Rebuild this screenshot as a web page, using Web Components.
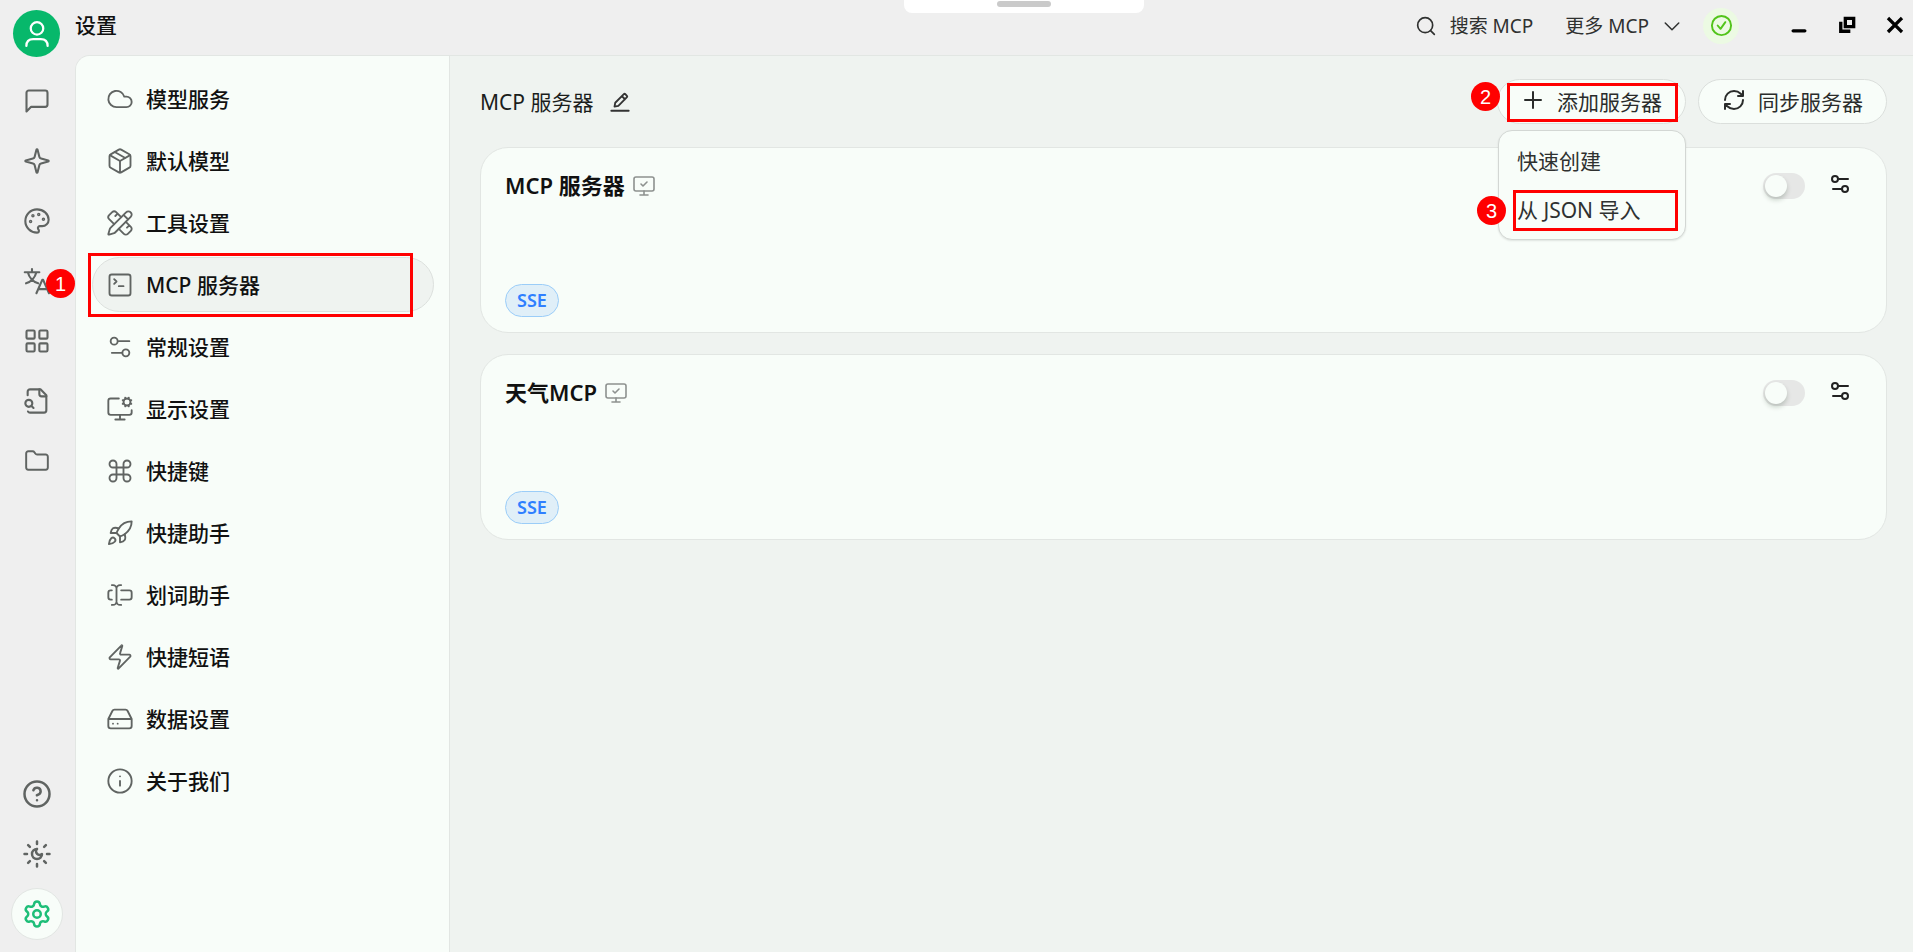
<!DOCTYPE html>
<html lang="zh-CN">
<head>
<meta charset="UTF-8">
<meta name="viewport" content="width=device-width, initial-scale=1.0">
<title>设置</title>
<style>
    :root {
        --bar: #efefef;
        --panel: #f8fdf9;
        --page: #eff3f0;
        --line: #e2e6e3;
        --icon: #606462;
        --green: #07b86b;
        --mark: #ff0000;
    }
    body {
        margin: 0;
        background: var(--bar);
        color: #1b1d1c;
        font-family: "Noto Sans", "Noto Sans CJK SC", sans-serif;
        font-size: 21px;
        line-height: 28px;
    }
</style>
</head>
<body>
<settings-app></settings-app>

<script>
const ICONS = {
    user: '<circle cx="12" cy="7.500" r="5"/><path d="M3.500 21.500c0-4 2.500-5.500 5.500-5.500h6c3 0 5.500 1.500 5.500 5.500"/>',
    message: '<path d="M21 15a2 2 0 0 1-2 2H7l-4 4V5a2 2 0 0 1 2-2h14a2 2 0 0 1 2 2z"/>',
    sparkle: '<path d="M9.937 15.5A2 2 0 0 0 8.5 14.063l-6.135-1.582a.5.5 0 0 1 0-.962L8.5 9.936A2 2 0 0 0 9.937 8.5l1.582-6.135a.5.5 0 0 1 .963 0L14.063 8.5A2 2 0 0 0 15.5 9.937l6.135 1.581a.5.5 0 0 1 0 .964L15.5 14.063a2 2 0 0 0-1.437 1.437l-1.582 6.135a.5.5 0 0 1-.963 0z"/>',
    palette: '<circle cx="13.5" cy="6.5" r=".6"/><circle cx="17.5" cy="10.5" r=".6"/><circle cx="8.5" cy="7.5" r=".6"/><circle cx="6.500" cy="12.5" r=".6"/><path d="M12 2C6.5 2 2 6.5 2 12s4.5 10 10 10c.926 0 1.648-.746 1.648-1.688 0-.437-.18-.835-.437-1.125-.29-.289-.438-.652-.438-1.125a1.64 1.64 0 0 1 1.668-1.668h1.996c3.051 0 5.555-2.503 5.555-5.554C21.965 6.012 17.461 2 12 2z"/>',
    translate: '<path d="M1.500 4.500h12.500M7.700 1.800v2.500M4.300 5c.8 3.500 4 7.500 8.700 9M11.300 5c-.8 3.500-4 7.500-8.700 9"/><path d="M11.500 22.500l5-11.500h.8l5 11.500M13.300 19h7.200"/>',
    grid: '<rect x="3" y="3" width="7" height="7" rx="1"/><rect x="14" y="3" width="7" height="7" rx="1"/><rect x="14" y="14" width="7" height="7" rx="1"/><rect x="3" y="14" width="7" height="7" rx="1"/>',
    fileSearch: '<path d="M14 2v4a2 2 0 0 0 2 2h4"/><path d="M4.268 21a2 2 0 0 0 1.727 1H18a2 2 0 0 0 2-2V7l-5-5H6a2 2 0 0 0-2 2v3"/><path d="m9 18-1.500-1.500"/><circle cx="5" cy="14" r="3"/>',
    folder: '<path d="M20 20a2 2 0 0 0 2-2V8a2 2 0 0 0-2-2h-7.900a2 2 0 0 1-1.690-.9L9.600 3.900A2 2 0 0 0 7.930 3H4a2 2 0 0 0-2 2v13a2 2 0 0 0 2 2Z"/>',
    help: '<circle cx="12" cy="12" r="10"/><path d="M9.090 9a3 3 0 0 1 5.830 1c0 2-3 3-3 3M12 17h.01"/>',
    sunMoon: '<path d="M12 8a2.830 2.830 0 0 0 4 4 4 4 0 1 1-4-4M12 2v2M12 20v2M4.900 4.900l1.400 1.400M17.700 17.700l1.400 1.400M2 12h2M20 12h2M6.300 17.700l-1.400 1.400M19.100 4.900l-1.400 1.400"/>',
    gear: '<path d="M9.671 4.136a2.34 2.34 0 0 1 4.659 0 2.34 2.34 0 0 0 3.319 1.915 2.34 2.34 0 0 1 2.33 4.033 2.34 2.34 0 0 0 0 3.831 2.34 2.34 0 0 1-2.33 4.033 2.34 2.34 0 0 0-3.319 1.915 2.34 2.34 0 0 1-4.659 0 2.34 2.34 0 0 0-3.32-1.915 2.34 2.34 0 0 1-2.33-4.033 2.34 2.34 0 0 0 0-3.831A2.34 2.34 0 0 1 6.35 6.051a2.34 2.34 0 0 0 3.319-1.915"/><circle cx="12" cy="12" r="3"/>',
    cloud: '<path d="M17.5 19H9a7 7 0 1 1 6.710-9h1.790a4.500 4.500 0 1 1 0 9Z"/>',
    box: '<path d="M11 21.730a2 2 0 0 0 2 0l7-4A2 2 0 0 0 21 16V8a2 2 0 0 0-1-1.730l-7-4a2 2 0 0 0-2 0l-7 4A2 2 0 0 0 3 8v8a2 2 0 0 0 1 1.730zM12 22V12"/><path d="M3.290 7 12 12l8.710-5M7.500 4.270l9 5.150"/>',
    tools: '<path d="M13 7 8.700 2.700a2.410 2.410 0 0 0-3.400 0L2.700 5.300a2.410 2.410 0 0 0 0 3.400L7 13M8 6l2-2M18 16l2-2M17 11l4.300 4.300c.94.94.94 2.460 0 3.400l-2.600 2.600c-.94.94-2.460.94-3.400 0L11 17"/><path d="M21.174 6.812a1 1 0 0 0-3.986-3.987L3.842 16.174a2 2 0 0 0-.5.83l-1.321 4.352a.5.5 0 0 0 .623.622l4.353-1.320a2 2 0 0 0 .83-.497zM15 5l4 4"/>',
    terminal: '<path d="m7 11 2-2-2-2M11 13h4"/><rect x="3" y="3" width="18" height="18" rx="2"/>',
    sliders: '<path d="M20 7h-9M14 17H5"/><circle cx="17" cy="17" r="3"/><circle cx="7" cy="7" r="3"/>',
    monitorCog: '<path d="M12 17v4M14.305 7.530l.923-.382M15.228 4.852l-.923-.383M16.852 3.228l-.383-.924M16.852 8.772l-.383.923M19.148 3.228l.383-.924M19.530 9.696l-.382-.924M20.772 4.852l.924-.383M20.772 7.148l.924.383M22 13v2a2 2 0 0 1-2 2H4a2 2 0 0 1-2-2V5a2 2 0 0 1 2-2h7M8 21h8"/><circle cx="18" cy="6" r="3"/>',
    command: '<path d="M15 6v12a3 3 0 1 0 3-3H6a3 3 0 1 0 3 3V6a3 3 0 1 0-3 3h12a3 3 0 1 0-3-3"/>',
    rocket: '<path d="M4.500 16.500c-1.500 1.260-2 5-2 5s3.740-.5 5-2c.71-.84.7-2.130-.09-2.910a2.180 2.180 0 0 0-2.910-.09zM12 15l-3-3a22 22 0 0 1 2-3.950A12.880 12.880 0 0 1 22 2c0 2.720-.78 7.500-6 11a22.350 22.350 0 0 1-4 2z"/><path d="M9 12H4s.55-3.030 2-4c1.620-1.080 5 0 5 0M12 15v5s3.030-.55 4-2c1.080-1.620 0-5 0-5"/>',
    cursor: '<path d="M5 3.500h1a3 3 0 0 1 3 3 3 3 0 0 1 3-3h1M13 20.500h-1a3 3 0 0 1-3-3 3 3 0 0 1-3 3H5M5 16H4a2 2 0 0 1-2-2v-4a2 2 0 0 1 2-2h1M13 8h7a2 2 0 0 1 2 2v4a2 2 0 0 1-2 2h-7M9 7v10"/>',
    zap: '<path d="M4 14a1 1 0 0 1-.78-1.630l9.900-10.200a.5.5 0 0 1 .86.46l-1.920 6.020A1 1 0 0 0 13 10h7a1 1 0 0 1 .78 1.630l-9.900 10.200a.5.5 0 0 1-.86-.46l1.920-6.020A1 1 0 0 0 11 14z"/>',
    drive: '<path d="M22 12H2M5.450 5.110 2 12v6a2 2 0 0 0 2 2h16a2 2 0 0 0 2-2v-6l-3.450-6.890A2 2 0 0 0 16.760 4H7.240a2 2 0 0 0-1.790 1.110zM6 16h.01M10 16h.01"/>',
    info: '<circle cx="12" cy="12" r="10"/><path d="M12 16v-4M12 8h.01"/>',
    monitorCheck: '<path d="m9 10 2 2 4-4M12 17v4M8 21h8"/><rect x="2" y="3" width="20" height="14" rx="2"/>',
    search: '<circle cx="11" cy="11" r="9"/><path d="m22 22-4.500-4.500"/>',
    chevron: '<path d="m3 8 9 9 9-9"/>',
    check: '<circle cx="12" cy="12" r="10"/><path d="m8 12 3 3.500 5-7"/>',
    minimize: '<path d="M5 19h14"/>',
    restore: '<path d="M10 4h10v10H10z" stroke-linejoin="miter"/><path d="M4.500 8v11.500H16" stroke-linecap="butt" stroke-linejoin="miter"/>',
    close: '<path d="m5 5 14 14M19 5 5 19" stroke-linecap="square"/>',
    plus: '<path d="M12 4v16M4 12h16"/>',
    refresh: '<path d="M3 12a9 9 0 0 1 9-9 9.750 9.750 0 0 1 6.740 2.740L21 8M21 3v5h-5M21 12a9 9 0 0 1-9 9 9.750 9.750 0 0 1-6.740-2.740L3 16M8 16H3v5"/>',
    edit: '<path d="M6 17l.8-4.200L16.200 3.300a1 1 0 0 1 1.400 0l2 2a1 1 0 0 1 0 1.400L10.200 16.200zM14 5.500l3.500 3.500M2.500 21.500h19"/>'
};

// <ui-icon name="" size="" stroke="">
class UiIcon extends HTMLElement {
    constructor() {
        super();
        this.attachShadow({ mode: 'open' });
    }

    connectedCallback() {
        const size = this.getAttribute('size') || 28;
        const stroke = this.getAttribute('stroke') || 1.6;
        this.shadowRoot.innerHTML = `
            <style>
                :host { display: block; flex: none; }
                svg { display: block; }
            </style>
            <svg width="${size}" height="${size}" viewBox="0 0 24 24" fill="none" stroke="currentColor"
                stroke-width="${stroke}" stroke-linecap="round" stroke-linejoin="round" aria-hidden="true">
                ${ICONS[this.getAttribute('name')] || ''}
            </svg>
        `;
    }
}

// Numbered red dot of the walkthrough
class StepDot extends HTMLElement {
    constructor() {
        super();
        this.attachShadow({ mode: 'open' });
        this.shadowRoot.innerHTML = `
            <style>
                :host {
                    display: flex;
                    align-items: center;
                    justify-content: center;
                    width: 29px;
                    height: 29px;
                    border-radius: 50%;
                    background: var(--mark);
                    color: #fff;
                    font: 20px/28px "Liberation Sans", sans-serif;
                }
            </style>
            <slot></slot>
        `;
    }
}

class NavRail extends HTMLElement {
    constructor() {
        super();
        this.attachShadow({ mode: 'open' });
    }

    connectedCallback() {
        const top = [
            ['message', '对话'], ['sparkle', '助手'], ['palette', '绘画'], ['translate', '翻译'],
            ['grid', '小程序'], ['fileSearch', '知识库'], ['folder', '文件']
        ];
        const bottom = [['help', '帮助'], ['sunMoon', '主题'], ['gear', '设置']];
        const button = ([icon, label], size, stroke) => `
            <button class="${icon}" aria-label="${label}">
                <ui-icon name="${icon}" size="${size}" stroke="${stroke}"></ui-icon>
            </button>`;

        this.shadowRoot.innerHTML = `
            <style>
                :host {
                    display: flex;
                    flex-direction: column;
                    align-items: center;
                    box-sizing: border-box;
                    padding: 10px 2px 12px 0;
                }
                nav {
                    display: flex;
                    flex-direction: column;
                    gap: 8px;
                }
                .bottom { margin-top: auto; }
                button {
                    display: flex;
                    align-items: center;
                    justify-content: center;
                    box-sizing: border-box;
                    width: 52px;
                    height: 52px;
                    padding: 0;
                    border: 1px solid transparent;
                    border-radius: 50%;
                    background: none;
                    color: var(--icon);
                }
                .avatar {
                    width: 47px;
                    height: 47px;
                    margin-bottom: 18px;
                    border: 0;
                    background: var(--green);
                    color: #fff;
                }
                .gear {
                    background: var(--panel);
                    border-color: var(--line);
                    color: #1ebe78;
                }
            </style>
            <button class="avatar" aria-label="用户"><ui-icon name="user" size="30" stroke="1.8"></ui-icon></button>
            <nav>${top.map(item => button(item, item[0] === 'folder' ? 26 : 28, 1.8)).join('')}</nav>
            <nav class="bottom">${bottom.map(item => button(item, 30, 2)).join('')}</nav>
        `;
    }
}

class TopBar extends HTMLElement {
    constructor() {
        super();
        this.attachShadow({ mode: 'open' });
        this.shadowRoot.innerHTML = `
            <style>
                :host {
                    display: flex;
                    align-items: center;
                    height: 51px;
                    padding-bottom: 4px;
                }
                h1 {
                    margin: 0;
                    padding-bottom: 2px;
                    font-size: 21px;
                    font-weight: 500;
                    color: #111;
                }
                .tools, .windows {
                    display: flex;
                    align-items: center;
                }
                .tools { margin-left: auto; }
                .windows {
                    gap: 12px;
                    padding-bottom: 2px;
                }
                button {
                    display: flex;
                    align-items: center;
                    gap: 14px;
                    padding: 0;
                    border: 0;
                    background: none;
                    color: #2f3130;
                    font: inherit;
                    font-size: 19px;
                }
                .more { margin-left: 32px; }
                .status {
                    justify-content: center;
                    width: 36px;
                    height: 36px;
                    margin: 0 42px 0 22px;
                    border-radius: 50%;
                    background: #ecfae3;
                    color: #52c41a;
                }
                .windows button {
                    justify-content: center;
                    width: 36px;
                    height: 36px;
                    color: #000;
                }
            </style>
            <h1><slot></slot></h1>
            <div class="tools">
                <button><ui-icon name="search" size="20" stroke="2"></ui-icon>搜索 MCP</button>
                <button class="more">更多 MCP<ui-icon name="chevron" size="18" stroke="2"></ui-icon></button>
                <button class="status" aria-label="状态"><ui-icon name="check" size="23" stroke="2"></ui-icon></button>
            </div>
            <div class="windows">
                <button aria-label="最小化"><ui-icon name="minimize" size="20" stroke="4"></ui-icon></button>
                <button aria-label="还原"><ui-icon name="restore" size="20" stroke="4"></ui-icon></button>
                <button aria-label="关闭"><ui-icon name="close" size="20" stroke="4"></ui-icon></button>
            </div>
        `;
    }
}

class SettingsMenu extends HTMLElement {
    constructor() {
        super();
        this.attachShadow({ mode: 'open' });
        this.shadowRoot.innerHTML = `
            <style>
                :host {
                    display: block;
                    padding: 15px 15px 15px 16px;
                    background: var(--panel);
                    border-right: 1px solid var(--line);
                    border-top-left-radius: 14px;
                }
                nav {
                    display: flex;
                    flex-direction: column;
                    gap: 7px;
                }
            </style>
            <nav><slot></slot></nav>
        `;
    }
}

class MenuItem extends HTMLElement {
    constructor() {
        super();
        this.attachShadow({ mode: 'open' });
    }

    connectedCallback() {
        const step = this.getAttribute('step');
        this.shadowRoot.innerHTML = `
            <style>
                :host {
                    display: block;
                    position: relative;
                }
                a {
                    display: flex;
                    align-items: center;
                    gap: 12px;
                    box-sizing: border-box;
                    height: 55px;
                    padding: 0 13px;
                    border: 1px solid transparent;
                    border-radius: 28px;
                    color: #111;
                    font-weight: 500;
                    text-decoration: none;
                }
                ui-icon { color: var(--icon); }
                :host([active]) a {
                    background: var(--page);
                    border-color: #dde1de;
                }
                .frame {
                    position: absolute;
                    inset: -4px 21px -5px -4px;
                    border: 3px solid var(--mark);
                }
                step-dot {
                    position: absolute;
                    left: -46px;
                    top: 12px;
                    z-index: 2;
                }
            </style>
            <a href="#${this.getAttribute('icon')}">
                <ui-icon name="${this.getAttribute('icon')}"></ui-icon>
                <span><slot></slot></span>
            </a>
            ${step ? `<div class="frame"></div><step-dot>${step}</step-dot>` : ''}
        `;
    }
}

class PillButton extends HTMLElement {
    constructor() {
        super();
        this.attachShadow({ mode: 'open' });
    }

    connectedCallback() {
        this.shadowRoot.innerHTML = `
            <style>
                :host { display: block; }
                button {
                    display: flex;
                    align-items: center;
                    gap: 12px;
                    box-sizing: border-box;
                    height: 45px;
                    padding: 0 23px;
                    border: 1px solid #dbdfdc;
                    border-radius: 23px;
                    background: var(--panel);
                    color: #2a2c2b;
                    font: inherit;
                }
                ui-icon { padding-bottom: 3px; }
            </style>
            <button>
                <ui-icon name="${this.getAttribute('icon')}" size="24" stroke="2"></ui-icon>
                <slot></slot>
            </button>
        `;
    }
}

class AddServer extends HTMLElement {
    constructor() {
        super();
        this.attachShadow({ mode: 'open' });
        this.shadowRoot.innerHTML = `
            <style>
                :host {
                    display: block;
                    position: relative;
                }
                .menu {
                    position: absolute;
                    top: 51px;
                    left: 1px;
                    right: 0;
                    z-index: 1;
                    display: flex;
                    flex-direction: column;
                    padding: 5px;
                    border: 1px solid #d3d7d4;
                    border-radius: 14px;
                    background: var(--panel);
                    box-shadow: 0 1px 2px rgba(0, 0, 0, 0.1);
                }
                .menu button {
                    height: 49px;
                    padding: 0 13px;
                    border: 0;
                    background: none;
                    color: #2f3130;
                    font: inherit;
                    text-align: left;
                }
                .frame, step-dot {
                    position: absolute;
                    z-index: 2;
                }
                .frame {
                    box-sizing: border-box;
                    right: 8px;
                    border: 3px solid var(--mark);
                }
                .add { left: 10px; top: 4px; height: 39px; }
                .json { left: 16px; top: 111px; height: 41px; }
                .two { left: -26px; top: 3px; }
                .three { left: -20px; top: 117px; }
            </style>
            <pill-button icon="plus">添加服务器</pill-button>
            <div class="menu" role="menu">
                <button role="menuitem">快速创建</button>
                <button role="menuitem">从 JSON 导入</button>
            </div>
            <div class="frame add"></div>
            <div class="frame json"></div>
            <step-dot class="two">2</step-dot>
            <step-dot class="three">3</step-dot>
        `;
    }
}

class ServerCard extends HTMLElement {
    constructor() {
        super();
        this.attachShadow({ mode: 'open' });
    }

    connectedCallback() {
        const name = this.getAttribute('name');
        this.shadowRoot.innerHTML = `
            <style>
                :host {
                    display: flex;
                    flex-direction: column;
                    justify-content: space-between;
                    box-sizing: border-box;
                    min-height: 186px;
                    padding: 20px 24px 15px;
                    border: 1px solid var(--line);
                    border-radius: 28px;
                    background: var(--panel);
                }
                header {
                    display: flex;
                    align-items: center;
                    height: 36px;
                }
                h3 {
                    margin: 0 7px 0 0;
                    padding-bottom: 3px;
                    font-size: 22px;
                    font-weight: 600;
                    color: #111;
                }
                header > ui-icon { color: #8d918f; }
                input {
                    appearance: none;
                    position: relative;
                    width: 42px;
                    height: 26px;
                    margin: 0 13px 0 auto;
                    border-radius: 13px;
                    background: #e6e7e6;
                }
                input::before {
                    content: "";
                    position: absolute;
                    top: 2px;
                    left: 2px;
                    width: 22px;
                    height: 22px;
                    border-radius: 50%;
                    background: var(--panel);
                    box-shadow: 0 3px 5px rgba(0, 35, 11, 0.2);
                }
                input:checked { background: var(--green); }
                input:checked::before { left: 18px; }
                button {
                    padding: 0 10px 4px;
                    border: 0;
                    background: none;
                    color: #222;
                }
                .tag {
                    align-self: flex-start;
                    padding: 1px 11px 2px;
                    border: 1px solid #9bcdf8;
                    border-radius: 17px;
                    background: #e0eff8;
                    color: #2f7fff;
                    font-size: 18px;
                    font-weight: 600;
                }
            </style>
            <header>
                <h3>${name}</h3>
                <ui-icon name="monitorCheck" size="24"></ui-icon>
                <input type="checkbox" role="switch" aria-label="${name}">
                <button aria-label="配置"><ui-icon name="sliders" size="24" stroke="2"></ui-icon></button>
            </header>
            <span class="tag"><slot></slot></span>
        `;
    }
}

class ServerPage extends HTMLElement {
    constructor() {
        super();
        this.attachShadow({ mode: 'open' });
        this.shadowRoot.innerHTML = `
            <style>
                :host {
                    display: block;
                    padding: 23px 26px 23px 30px;
                    background: var(--page);
                }
                .head {
                    display: flex;
                    align-items: center;
                    gap: 12px;
                    margin-bottom: 23px;
                }
                h2 {
                    margin: 0;
                    font-size: 21px;
                    font-weight: 400;
                }
                .edit {
                    padding: 0 4px;
                    margin-right: auto;
                    border: 0;
                    background: none;
                    color: #333;
                }
                .list {
                    display: flex;
                    flex-direction: column;
                    gap: 21px;
                }
            </style>
            <div class="head">
                <h2>MCP 服务器</h2>
                <button class="edit" aria-label="编辑"><ui-icon name="edit" size="22" stroke="2"></ui-icon></button>
                <add-server></add-server>
                <pill-button icon="refresh">同步服务器</pill-button>
            </div>
            <div class="list"><slot></slot></div>
        `;
    }
}

class SettingsApp extends HTMLElement {
    constructor() {
        super();
        this.attachShadow({ mode: 'open' });
        this.shadowRoot.innerHTML = `
            <style>
                :host {
                    display: grid;
                    grid-template-columns: 75px 1fr;
                    min-height: 100vh;
                }
                .window {
                    display: flex;
                    flex-direction: column;
                }
                main {
                    display: grid;
                    grid-template-columns: 374px 1fr;
                    flex: 1;
                    border: solid var(--line);
                    border-width: 1px 0 0 1px;
                    border-top-left-radius: 15px;
                }
                /* pull-down grip hanging over the title bar */
                .grip {
                    position: absolute;
                    top: 0;
                    left: 904px;
                    display: flex;
                    justify-content: center;
                    width: 240px;
                    height: 13px;
                    border-radius: 0 0 8px 8px;
                    background: #fff;
                }
                .grip::before {
                    content: "";
                    width: 54px;
                    height: 6px;
                    margin-top: 1px;
                    border-radius: 3px;
                    background: #cacaca;
                }
            </style>
            <nav-rail></nav-rail>
            <div class="window">
                <top-bar>设置</top-bar>
                <main>
                    <settings-menu>
                        <menu-item icon="cloud">模型服务</menu-item>
                        <menu-item icon="box">默认模型</menu-item>
                        <menu-item icon="tools">工具设置</menu-item>
                        <menu-item icon="terminal" step="1" active>MCP 服务器</menu-item>
                        <menu-item icon="sliders">常规设置</menu-item>
                        <menu-item icon="monitorCog">显示设置</menu-item>
                        <menu-item icon="command">快捷键</menu-item>
                        <menu-item icon="rocket">快捷助手</menu-item>
                        <menu-item icon="cursor">划词助手</menu-item>
                        <menu-item icon="zap">快捷短语</menu-item>
                        <menu-item icon="drive">数据设置</menu-item>
                        <menu-item icon="info">关于我们</menu-item>
                    </settings-menu>
                    <server-page>
                        <server-card name="MCP 服务器">SSE</server-card>
                        <server-card name="天气MCP">SSE</server-card>
                    </server-page>
                </main>
            </div>
            <div class="grip"></div>
        `;
    }
}

customElements.define('ui-icon', UiIcon);
customElements.define('step-dot', StepDot);
customElements.define('nav-rail', NavRail);
customElements.define('top-bar', TopBar);
customElements.define('settings-menu', SettingsMenu);
customElements.define('menu-item', MenuItem);
customElements.define('pill-button', PillButton);
customElements.define('add-server', AddServer);
customElements.define('server-card', ServerCard);
customElements.define('server-page', ServerPage);
customElements.define('settings-app', SettingsApp);
</script>
</body>
</html>
